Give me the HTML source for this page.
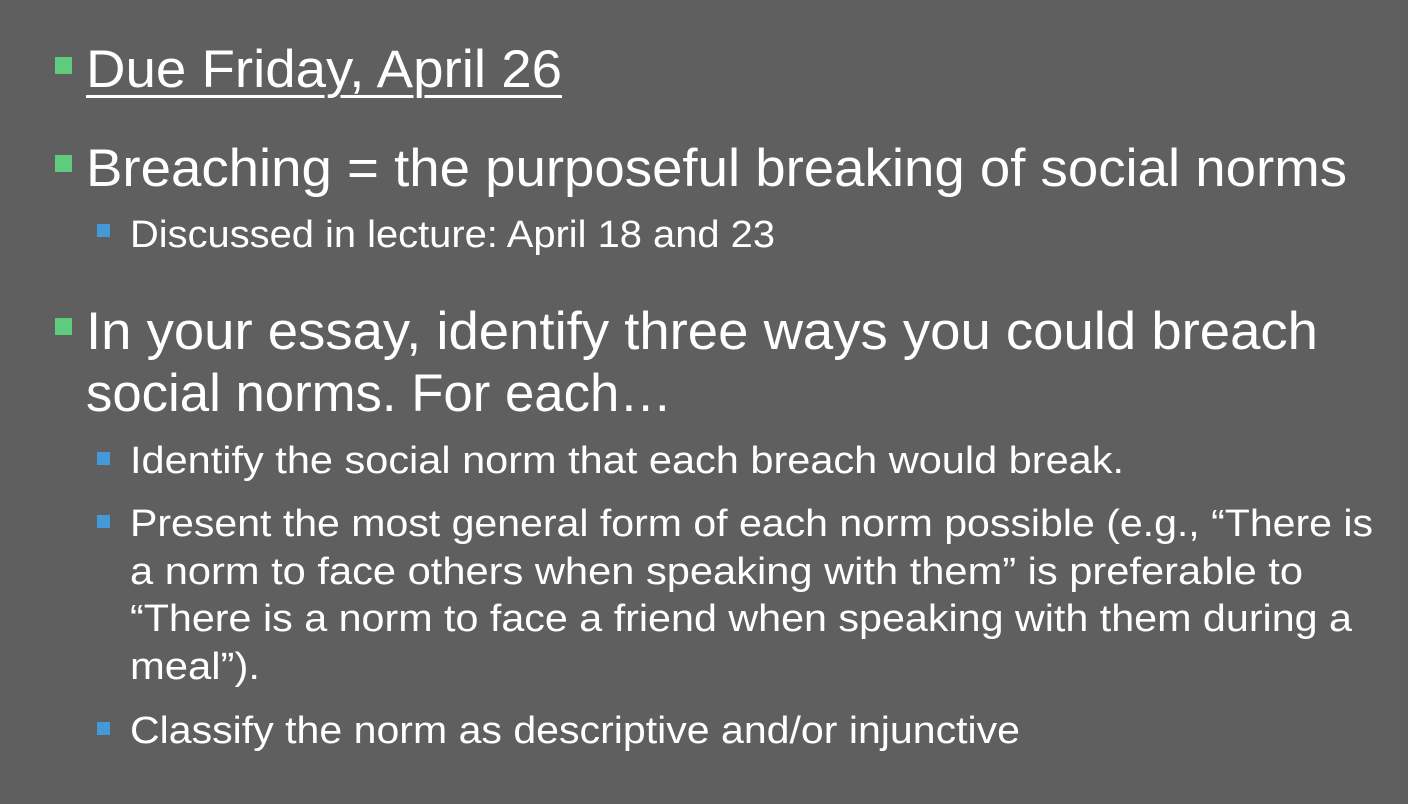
<!DOCTYPE html>
<html><head><meta charset="utf-8"><style>
html,body{margin:0;padding:0}
body{width:1408px;height:804px;background:#5f5f5f;position:relative;overflow:hidden;font-family:"Liberation Sans",sans-serif;color:#fff}
.l{position:absolute;white-space:nowrap;line-height:1;transform-origin:0 0}
.b{font-size:53px}
.s{font-size:38px}
.g{position:absolute;width:17px;height:17px;background:#5fcb7d}
.q{position:absolute;width:13px;height:13px;background:#4499d9}
u{text-decoration-thickness:3px;text-underline-offset:8px}
</style></head><body>
<div class="g" style="left:55px;top:57px"></div>
<div class="g" style="left:55px;top:155px"></div>
<div class="g" style="left:55px;top:318px"></div>
<div class="q" style="left:97px;top:224px"></div>
<div class="q" style="left:97px;top:452px"></div>
<div class="q" style="left:97px;top:515px"></div>
<div class="q" style="left:97px;top:722px"></div>

<div class="l b" style="left:86px;top:43px"><u>Due Friday, April 26</u></div>
<div class="l b" style="left:86px;top:142px">Breaching = the purposeful breaking of social norms</div>
<div class="l s" style="left:130px;top:216px">Discussed in lecture: April 18 and 23</div>
<div class="l b" style="left:86px;top:305px">In your essay, identify three ways you could breach</div>
<div class="l b" style="left:86px;top:367px">social norms. For each…</div>
<div class="l s" style="left:130px;top:442px">Identify the social norm that each breach would break.</div>
<div class="l s" style="left:130px;top:505px">Present the most general form of each norm possible (e.g., “There is</div>
<div class="l s" style="left:130px;top:553px">a norm to face others when speaking with them” is preferable to</div>
<div class="l s" style="left:130px;top:600px">“There is a norm to face a friend when speaking with them during a</div>
<div class="l s" style="left:130px;top:648px">meal”).</div>
<div class="l s" style="left:130px;top:712px">Classify the norm as descriptive and/or injunctive</div>
<script>
var w=[476,1261,645,1232,586,994,1243,1173,1222,130,890];
var ls=document.querySelectorAll('.l');
for(var i=0;i<ls.length;i++){var r=ls[i].getBoundingClientRect().width;if(r>0)ls[i].style.transform='scaleX('+(w[i]/r)+')';}
</script>
</body></html>
